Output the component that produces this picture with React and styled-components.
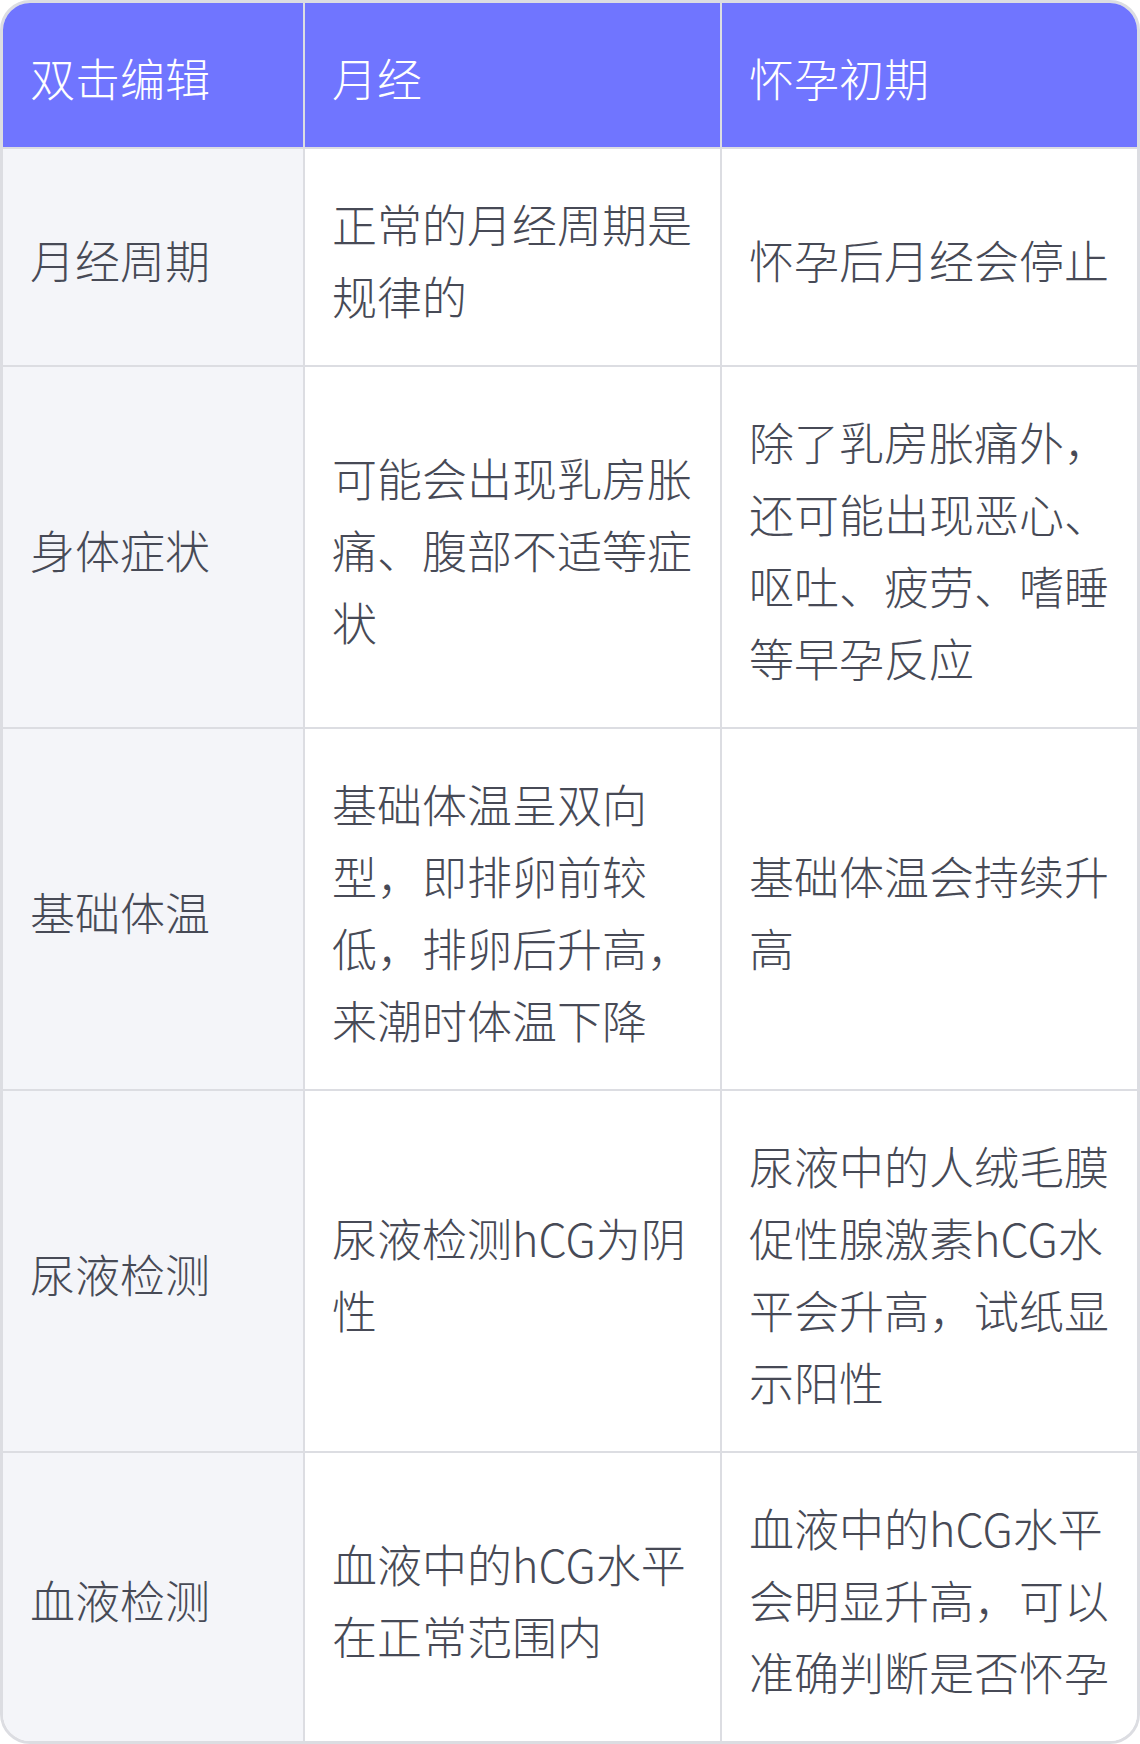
import React from "react"
import styled, { createGlobalStyle } from "styled-components"

const GlobalStyle = createGlobalStyle`
    html, body {
        margin: 0;
        padding: 0;
        background-color: #ffffff;
    }
`

const Frame = styled("div")`
    width: 1140px;
    box-sizing: border-box;
    border: 3px solid #dcdde2;
    border-radius: 30px;
    overflow: hidden;
    background-color: #ffffff;
`

const Table = styled("table")`
    width: 100%;
    table-layout: fixed;
    border-collapse: separate;
    border-spacing: 0;

    font-family: "Noto Sans CJK SC", "Noto Sans", sans-serif;
    font-weight: 200;
    font-size: 45px;
    line-height: 72px;
`

const HeadCell = styled("th")`
    padding: 39px 26px 33px 27px;
    text-align: left;
    font-weight: 200;
    color: #ffffff;
    background-color: #7075ff;
    border-bottom: 2px solid #dcdde2;
    border-right: ${props => props.last ? "none" : "2px solid #dcdde2"};
`

const Cell = styled("td")`
    padding: 39px 26px 33px 27px;
    vertical-align: middle;
    color: #474a56;
    background-color: ${props => props.label ? "#f4f5f9" : "#ffffff"};
    border-bottom: ${props => props.bottom ? "none" : "2px solid #dcdde2"};
    border-right: ${props => props.last ? "none" : "2px solid #dcdde2"};
    word-break: break-all;
`

const header = ["双击编辑", "月经", "怀孕初期"]

const rows = [
    ["月经周期", "正常的月经周期是规律的", "怀孕后月经会停止"],
    ["身体症状", "可能会出现乳房胀痛、腹部不适等症状", "除了乳房胀痛外，还可能出现恶心、呕吐、疲劳、嗜睡等早孕反应"],
    ["基础体温", "基础体温呈双向型，即排卵前较低，排卵后升高，来潮时体温下降", "基础体温会持续升高"],
    ["尿液检测", "尿液检测hCG为阴性", "尿液中的人绒毛膜促性腺激素hCG水平会升高，试纸显示阳性"],
    ["血液检测", "血液中的hCG水平在正常范围内", "血液中的hCG水平会明显升高，可以准确判断是否怀孕"],
]

const App = () => {
    return (
        <>
            <GlobalStyle />
            <Frame>
                <Table>
                    <colgroup>
                        <col style={{ width: "302px" }} />
                        <col style={{ width: "417px" }} />
                        <col />
                    </colgroup>
                    <thead>
                        <tr>
                            {header.map((h, i) => (
                                <HeadCell key={h} last={i === header.length - 1}>{h}</HeadCell>
                            ))}
                        </tr>
                    </thead>
                    <tbody>
                        {rows.map((row, r) => (
                            <tr key={row[0]}>
                                {row.map((text, i) => (
                                    <Cell
                                        key={i}
                                        label={i === 0}
                                        last={i === row.length - 1}
                                        bottom={r === rows.length - 1}
                                    >
                                        {text}
                                    </Cell>
                                ))}
                            </tr>
                        ))}
                    </tbody>
                </Table>
            </Frame>
        </>
    )
}

export default App
